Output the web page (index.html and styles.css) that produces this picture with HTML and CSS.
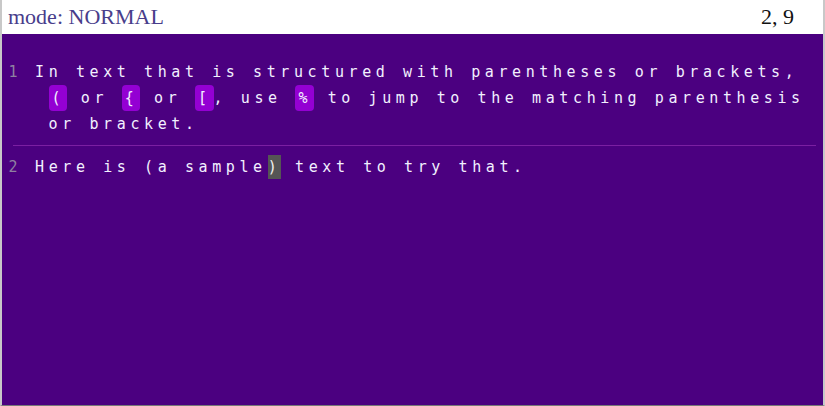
FILE: index.html
```html
<!DOCTYPE html>
<html>
<head>
<meta charset="utf-8">
<link rel="stylesheet" href="styles.css">
</head>
<body>
<div class="frame">
  <header class="status">
    <span class="mode">mode: NORMAL</span>
    <span class="pos">2, 9</span>
  </header>
  <main class="editor">
    <div class="row first">
      <span class="num">1</span>
      <span class="text">In text that is structured with parentheses or brackets, <span class="key">(</span> or <span class="key">{</span> or <span class="key">[</span>, use <span class="key">%</span> to jump to the matching parenthesis or bracket.</span>
    </div>
    <div class="row">
      <span class="num">2</span>
      <span class="text">Here is (a sample<span class="cursor">)</span> text to try that.</span>
    </div>
  </main>
</div>
</body>
</html>
```
FILE: styles.css
```css
html, body {
  margin: 0;
  padding: 0;
  height: 100%;
}
body {
  background: #ffffff;
}
.frame {
  height: 405px;
  border-left: 2px solid #c8c8c8;
  border-right: 2px solid #c8c8c8;
  border-bottom: 1px solid #777777;
  display: flex;
  flex-direction: column;
  box-sizing: content-box;
  width: 821px;
}
.status {
  height: 34px;
  background: #ffffff;
  display: flex;
  align-items: center;
  justify-content: space-between;
  padding: 0 29px 0 6px;
  font-family: "Liberation Serif", serif;
  font-size: 22px;
  flex: none;
}
.mode {
  color: #483d8b;
}
.pos {
  color: #111111;
}
.editor {
  flex: 1;
  background: #4b0080;
  padding: 17px 7px 0 11px;
  font-family: "DejaVu Sans Mono", monospace;
  font-size: 15px;
  letter-spacing: 4.6px;
  line-height: 26px;
  color: #f2f0ff;
}
.row {
  display: flex;
  padding: 8px 0;
}
.row.first {
  border-bottom: 1px solid #7b1fa2;
}
.num {
  flex: none;
  width: 26.5px;
  margin-left: -4.5px;
  color: #8e80a0;
  letter-spacing: 0;
}
.text {
  flex: 1;
  padding-left: 13.6px;
  text-indent: -13.6px;
}
.key {
  background: #9400d3;
  border-radius: 4px;
  padding: 4px 2px 4px 3px;
}
.cursor {
  background: #555555;
  color: #f0f0f0;
  padding: 3px 0 3px 0;
  margin-left: 1px;
}
```
